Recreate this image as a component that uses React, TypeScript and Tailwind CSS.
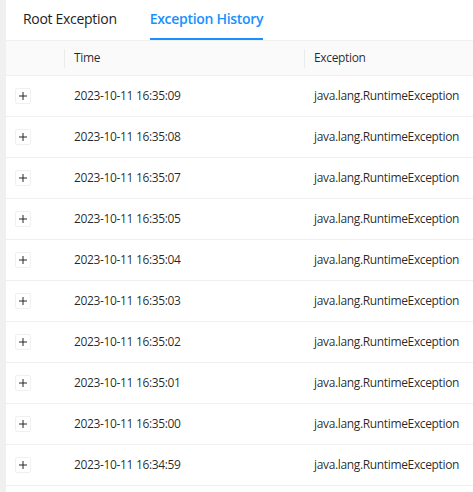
import React from 'react';

const times = [
    '2023-10-11 16:35:09',
    '2023-10-11 16:35:08',
    '2023-10-11 16:35:07',
    '2023-10-11 16:35:05',
    '2023-10-11 16:35:04',
    '2023-10-11 16:35:03',
    '2023-10-11 16:35:02',
    '2023-10-11 16:35:01',
    '2023-10-11 16:35:00',
    '2023-10-11 16:34:59',
];

const PlusBox: React.FC = () => (
    <div className="w-[16px] h-[16px] rounded-[2px] border border-[#f0f0f0] bg-white flex items-center justify-center">
        <svg width="10" height="10" viewBox="0 0 10 10">
            <path d="M5 1v8M1 5h8" stroke="#262626" strokeWidth="1" />
        </svg>
    </div>
);

export default function App() {
    return (
        <div className="w-[473px] h-[492px] overflow-hidden bg-[#f0f0f0] pl-[6px] font-['Open_Sans','Noto_Sans',sans-serif] text-[rgba(0,0,0,0.85)]">
            <div className="bg-white h-full">
                {/* tabs */}
                <div className="h-[40px] flex items-stretch pl-[17px] gap-[33px] text-[14px] tracking-[-0.3px]">
                    <div className="flex items-center pb-[4px] text-[#222]">Root Exception</div>
                    <div className="flex items-center pb-[4px] relative text-[#1890ff] font-semibold">
                        Exception History
                        <div className="absolute left-0 right-0 bottom-0 h-[2px] bg-[#1890ff]" />
                    </div>
                </div>

                {/* table */}
                <div className="border-t border-[#f0f0f0] text-[12px] tracking-[-0.35px]">
                    <div className="flex h-[35px] bg-[#fafafa] border-b border-[#f0f0f0] font-medium">
                        <div className="w-[59px] shrink-0 relative">
                            <div className="absolute right-0 top-[8px] h-[19px] w-px bg-[#ebebeb]" />
                        </div>
                        <div className="w-[240px] shrink-0 relative flex items-center pl-[9px]">
                            Time
                            <div className="absolute right-0 top-[8px] h-[19px] w-px bg-[#ebebeb]" />
                        </div>
                        <div className="flex-1 flex items-center pl-[9px]">Exception</div>
                    </div>
                    {times.map(t => (
                        <div key={t} className="flex h-[41px] border-b border-[#f0f0f0] items-center">
                            <div className="w-[59px] shrink-0 pl-[9px]">
                                <PlusBox />
                            </div>
                            <div className="w-[240px] shrink-0 pl-[9px]">{t}</div>
                            <div className="flex-1 pl-[9px]">java.lang.RuntimeException</div>
                        </div>
                    ))}
                </div>
            </div>
        </div>
    );
}
